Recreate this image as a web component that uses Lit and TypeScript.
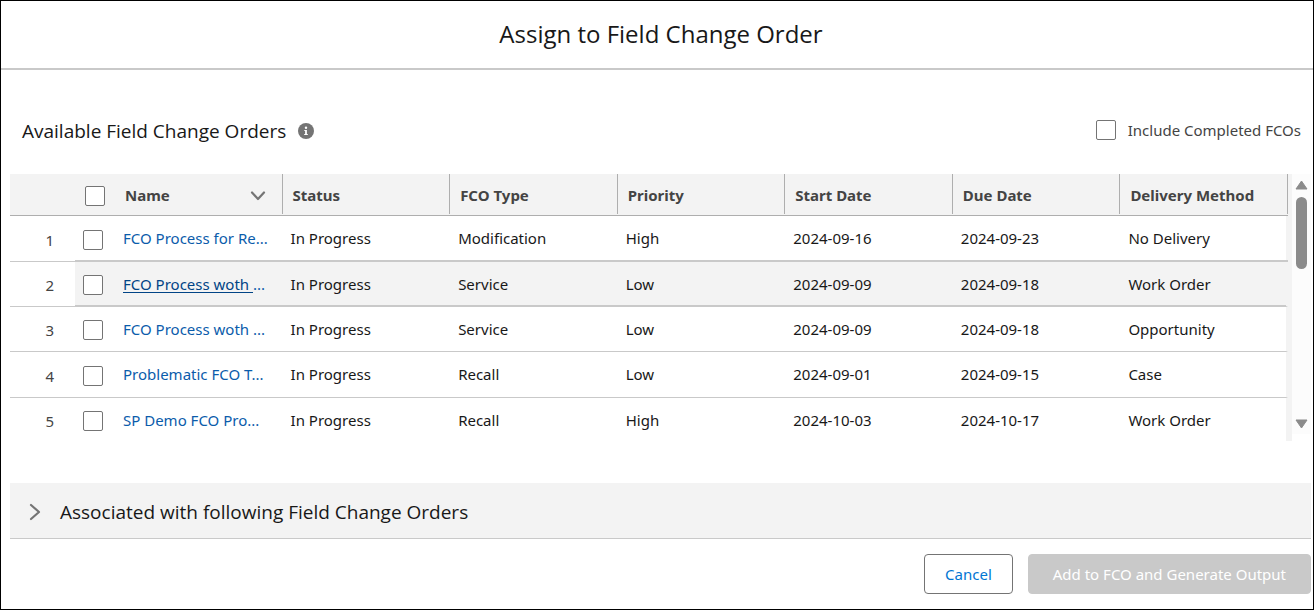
import { LitElement, html, css } from "lit";
import { customElement, state } from "lit/decorators.js";
import { classMap } from "lit/directives/class-map.js";

interface Order {
  name: string;
  cut: string;
  status: string;
  type: string;
  priority: string;
  start: string;
  due: string;
  delivery: string;
}

const ORDERS: Order[] = [
  { name: "FCO Process for Re", cut: "...", status: "In Progress", type: "Modification", priority: "High", start: "2024-09-16", due: "2024-09-23", delivery: "No Delivery" },
  { name: "FCO Process woth ", cut: "...", status: "In Progress", type: "Service", priority: "Low", start: "2024-09-09", due: "2024-09-18", delivery: "Work Order" },
  { name: "FCO Process woth ", cut: "...", status: "In Progress", type: "Service", priority: "Low", start: "2024-09-09", due: "2024-09-18", delivery: "Opportunity" },
  { name: "Problematic FCO T", cut: "...", status: "In Progress", type: "Recall", priority: "Low", start: "2024-09-01", due: "2024-09-15", delivery: "Case" },
  { name: "SP Demo FCO Pro", cut: "...", status: "In Progress", type: "Recall", priority: "High", start: "2024-10-03", due: "2024-10-17", delivery: "Work Order" },
];

const COLUMNS = ["Status", "FCO Type", "Priority", "Start Date", "Due Date", "Delivery Method"];

@customElement("fco-table")
export class FcoTable extends LitElement {
  @state() private active = 1;

  static styles = css`
    :host {
      display: flex;
      height: 267px;
    }
    .scroller {
      flex: 1;
      min-width: 0;
      overflow: hidden;
      background: #f3f3f3;
      padding-right: 4px;
    }
    .grid {
      width: 100%;
      table-layout: fixed;
      border-collapse: separate;
      border-spacing: 0;
      font-family: "Noto Sans", sans-serif;
      font-size: 15px;
      line-height: 20px;
      color: #181818;
    }
    .num-col { width: 65px; }
    .check-col { width: 40px; }
    .head {
      height: 42px;
      box-sizing: border-box;
      padding: 2px 10px 0;
      background: #f3f3f3;
      border-bottom: 1px solid #aeaeae;
      color: #444;
      font-weight: 700;
      text-align: left;
      white-space: nowrap;
    }
    .ruled {
      padding-top: 0;
      background: linear-gradient(#aeaeae, #aeaeae) right top / 1px 40px no-repeat #f3f3f3;
    }
    .head-line {
      display: flex;
      align-items: center;
      justify-content: space-between;
    }
    .sort {
      border: 0;
      padding: 2px 7px 0 0;
      background: none;
      display: flex;
    }
    .cell {
      box-sizing: border-box;
      height: 45px;
      padding: 0 8px;
      background: #fff;
      border-bottom: 1px solid #c9c9c9;
      white-space: nowrap;
      overflow: hidden;
    }
    .row:nth-child(3n + 1) .cell { height: 46px; padding-bottom: 2px; }
    .cell:last-child { border-right: 2px solid #f3f3f3; }
    .row:last-child .cell { border-bottom-color: transparent; }
    .row .cell.pick { padding: 2px 8px 0; }
    .row .cell.num {
      padding: 2px 21px 0 0;
      text-align: right;
      font-weight: 400;
      color: #444;
    }
    .active .cell:not(.num) {
      background: #f3f3f3;
      box-shadow: 0 -2px #c9c9c9, inset 0 -1px #c9c9c9;
    }
    .link { color: #0b5cab; text-decoration: none; }
    .active .link { color: #014486; text-decoration: underline; text-underline-offset: 2px; }
    .cut { color: #0b5cab; }
    .box {
      appearance: none;
      display: block;
      box-sizing: border-box;
      width: 20px;
      height: 20px;
      margin: 0;
      border: 1px solid #747474;
      border-radius: 2px;
      background: #fff;
    }
    .bar {
      width: 19px;
      margin-bottom: 7px;
      background: #fcfcfc;
      display: flex;
      flex-direction: column;
      align-items: center;
      padding: 6px 0 5px;
      box-sizing: border-box;
    }
    .thumb {
      width: 11px;
      height: 72px;
      margin: 7px 0 auto;
      border-radius: 6px;
      background: #8b8b8b;
    }
    .arrow { display: block; }
  `;

  render() {
    return html`
      <div class="scroller">
        <table class="grid">
          <colgroup>
            <col class="num-col" />
            <col class="check-col" />
            <col span="7" />
          </colgroup>
          <thead>
            <tr>
              <th class="head"></th>
              <th class="head"><input class="box" type="checkbox" aria-label="Select all" /></th>
              <th class="head ruled">
                <div class="head-line">
                  Name
                  <button class="sort" type="button" aria-label="Sort by name">
                    <svg width="16" height="10" viewBox="0 0 16 10" fill="none" stroke="#747474" stroke-width="2.2" stroke-linecap="round" stroke-linejoin="round">
                      <path d="M2 1.5l6 6.5 6-6.5" />
                    </svg>
                  </button>
                </div>
              </th>
              ${COLUMNS.map((c) => html`<th class="head ruled">${c}</th>`)}
            </tr>
          </thead>
          <tbody>
            ${ORDERS.map(
              (o, i) => html`
                <tr class=${classMap({ row: true, active: i === this.active })} @mouseenter=${() => (this.active = i)}>
                  <th class="cell num" scope="row">${i + 1}</th>
                  <td class="cell pick"><input class="box" type="checkbox" aria-label="Select item ${i + 1}" /></td>
                  <td class="cell"><a class="link" href="#">${o.name}</a><span class="cut">${o.cut}</span></td>
                  <td class="cell">${o.status}</td>
                  <td class="cell">${o.type}</td>
                  <td class="cell">${o.priority}</td>
                  <td class="cell">${o.start}</td>
                  <td class="cell">${o.due}</td>
                  <td class="cell">${o.delivery}</td>
                </tr>
              `
            )}
          </tbody>
        </table>
      </div>
      <div class="bar" aria-hidden="true">
        <svg class="arrow" width="13" height="10" viewBox="0 0 13 10" fill="#8b8b8b" stroke="#8b8b8b" stroke-linejoin="round"><path d="M6.5 1L12 9H1z" /></svg>
        <div class="thumb"></div>
        <svg class="arrow" width="13" height="10" viewBox="0 0 13 10" fill="#8b8b8b" stroke="#8b8b8b" stroke-linejoin="round"><path d="M6.5 9L12 1H1z" /></svg>
      </div>
    `;
  }
}

@customElement("app-root")
export class AppRoot extends LitElement {
  static styles = css`
    :host {
      display: block;
      font-family: "Open Sans", "Noto Sans", sans-serif;
      color: #181818;
    }
    .dialog {
      box-sizing: border-box;
      min-height: 100vh;
      border: 1px solid #000;
      background: #fff;
      display: flex;
      flex-direction: column;
    }
    .top {
      padding: 15px 0 17px 8px;
      border-bottom: 2px solid #c9c9c9;
      text-align: center;
    }
    .title {
      margin: 0;
      font-size: 24px;
      line-height: 35px;
      font-weight: 400;
    }
    .body {
      padding: 45px 2px 0 9px;
      display: flex;
      flex-direction: column;
    }
    .lead {
      display: flex;
      align-items: center;
      justify-content: space-between;
      padding: 0 10px 28px 12px;
      height: 31px;
    }
    .lead-left {
      display: flex;
      align-items: center;
      gap: 12px;
    }
    .subtitle {
      margin: 0;
      font-size: 19px;
      line-height: 30px;
      font-weight: 400;
    }
    .include {
      display: flex;
      align-items: center;
      gap: 12px;
      padding-bottom: 2px;
      font-family: "Noto Sans", sans-serif;
      font-size: 15px;
      line-height: 20px;
      color: #444;
    }
    .box {
      appearance: none;
      box-sizing: border-box;
      width: 20px;
      height: 20px;
      margin: 0;
      border: 1px solid #747474;
      border-radius: 2px;
      background: #fff;
    }
    .section {
      margin-top: 42px;
      border: 0;
      border-bottom: 1px solid #c9c9c9;
      padding: 2px 18px 0;
      height: 56px;
      background: #f3f3f3;
      display: flex;
      align-items: center;
      gap: 18px;
      font: inherit;
      font-size: 19px;
      line-height: 30px;
      color: #181818;
      text-align: left;
    }
    .actions {
      display: flex;
      justify-content: flex-end;
      gap: 15px;
      padding: 15px 2px 15px;
    }
    .btn {
      box-sizing: border-box;
      height: 40px;
      padding: 0 20px;
      border: 1px solid #747474;
      border-radius: 4px;
      background: #fff;
      font-family: "Noto Sans", sans-serif;
      font-size: 15px;
      color: #0176d3;
    }
    .primary {
      padding: 0 24px;
      border-color: #c9c9c9;
      background: #c9c9c9;
      color: #fff;
    }
  `;

  render() {
    return html`
      <main class="dialog">
        <header class="top"><h1 class="title">Assign to Field Change Order</h1></header>
        <div class="body">
          <div class="lead">
            <div class="lead-left">
              <h2 class="subtitle">Available Field Change Orders</h2>
              <svg width="16" height="16" viewBox="0 0 16 16" role="img" aria-label="Info">
                <circle cx="8" cy="8" r="8" fill="#747474" />
                <circle cx="8" cy="4.8" r="1.2" fill="#fff" />
                <path d="M6.3 7h2.6v4h.9v1.1H6.2V11h.9V8.1h-.8z" fill="#fff" />
              </svg>
            </div>
            <label class="include"><input class="box" type="checkbox" />Include Completed FCOs</label>
          </div>
          <fco-table></fco-table>
          <button class="section" type="button" aria-expanded="false">
            <svg width="14" height="18" viewBox="0 0 14 18" fill="none" stroke="#747474" stroke-width="2.2" stroke-linecap="round" stroke-linejoin="round">
              <path d="M3 2l8 7-8 7" />
            </svg>
            Associated with following Field Change Orders
          </button>
        </div>
        <footer class="actions">
          <button class="btn" type="button">Cancel</button>
          <button class="btn primary" type="button" disabled>Add to FCO and Generate Output</button>
        </footer>
      </main>
    `;
  }
}
